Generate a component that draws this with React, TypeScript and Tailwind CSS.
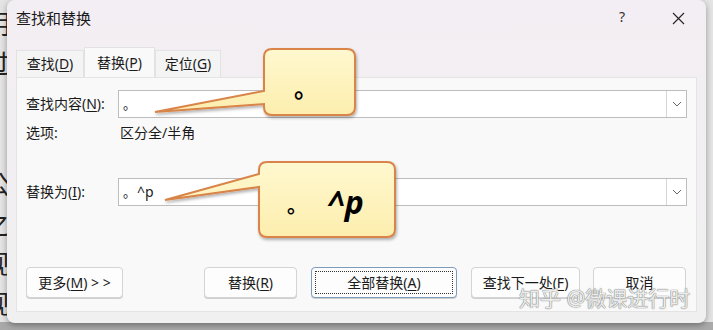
import React from "react";

const F = { fontFamily: '"Noto Sans", "Noto Sans CJK SC", sans-serif' } as const;

function U({ c }: { c: string }) {
  return <span className="underline underline-offset-2">{c}</span>;
}

function Btn({ w, children, def }: { w: string; children: React.ReactNode; def?: boolean }) {
  return (
    <div
      className={`${w} h-[31px] rounded-[4px] border ${def ? "border-[#7d9cbc]" : "border-[#d4d4d4]"} bg-[#fdfdfd] shadow-[0_1px_0_#cfcfcf] flex items-center justify-center p-[3px]`}
    >
      <div className={`w-full h-full flex items-center justify-center ${def ? "border border-dotted border-[#333]" : ""}`}>
        <span className="text-[14px] leading-none text-[#1a1a1a]">{children}</span>
      </div>
    </div>
  );
}

function Combo({ children }: { children?: React.ReactNode }) {
  return (
    <div className="flex-1 h-[28px] border border-[#bdbdbd] bg-white flex items-stretch">
      <div className="flex-1 flex items-center pl-[4px] text-[14px] leading-none text-[#1a1a1a]">{children}</div>
      <div className="w-[20px] border-l border-[#d6d6d6] flex items-center justify-center">
        <svg width="10" height="6" viewBox="0 0 10 6">
          <path d="M1 1 L5 5 L9 1" fill="none" stroke="#666" strokeWidth="1" />
        </svg>
      </div>
    </div>
  );
}

export default function App() {
  return (
    <div className="relative w-[713px] h-[330px] overflow-hidden bg-[#e4e4e4]" style={F}>
      {/* background document text peeking at left */}
      <div className="absolute left-[-16px] top-[4px] flex flex-col text-[26px] leading-[40px] text-[#222]">
        <span>明</span>
        <span>过</span>
        <span>，</span>
        <span>。</span>
        <span>公</span>
        <span>之</span>
        <span>现</span>
        <span>现</span>
      </div>
      <div className="absolute left-0 right-0 bottom-0 h-[8px] bg-[#a9a9a9]" />

      {/* dialog */}
      <div className="absolute left-[7px] top-0 w-[699px] h-[323px] rounded-[8px] bg-gradient-to-b from-[#f3eef3] to-[#f0f0f0] shadow-[0_2px_6px_rgba(0,0,0,0.35)] flex flex-col">
        {/* title bar */}
        <div className="h-[36px] flex items-center pl-[9px] relative">
          <span className="text-[15px] leading-none text-[#1a1a1a]">查找和替换</span>
          <span className="absolute left-[612px] top-[10px] text-[14px] leading-none text-[#333]">?</span>
          <svg className="absolute left-[665px] top-[12px]" width="13" height="13" viewBox="0 0 13 13">
            <path d="M1 1 L12 12 M12 1 L1 12" stroke="#222" strokeWidth="1.1" />
          </svg>
        </div>
        {/* tabs */}
        <div className="h-[41px] flex items-end pl-[9px]">
          <div className="w-[68px] h-[27px] border border-b-0 border-[#e2e2e2] bg-[#f4f4f4] flex items-center justify-center text-[14px] leading-none text-[#1a1a1a]">
            查找(<U c="D" />)
          </div>
          <div className="w-[71px] h-[30px] bg-[#f9f9f9] border border-b-0 border-[#e2e2e2] flex items-center justify-center text-[14px] leading-none text-[#1a1a1a]">
            替换(<U c="P" />)
          </div>
          <div className="w-[66px] h-[27px] border border-b-0 border-[#e2e2e2] bg-[#f4f4f4] flex items-center justify-center text-[14px] leading-none text-[#1a1a1a]">
            定位(<U c="G" />)
          </div>
        </div>
        {/* panel */}
        <div className="mx-[9px] w-[681px] h-[235px] bg-[#f9f9f9] border border-[#e4e4e4] flex flex-col pl-[9px] pr-[9px] pt-[12px]">
          <div className="flex items-center h-[28px]">
            <div className="w-[92px] text-[14px] leading-none text-[#1a1a1a]">
              查找内容(<U c="N" />):
            </div>
            <Combo>
              <span className="text-[13px]">。</span>
            </Combo>
          </div>
          <div className="flex items-center h-[30px]">
            <div className="w-[94px] text-[14px] leading-none text-[#1a1a1a]">选项:</div>
            <div className="text-[14px] leading-none text-[#1a1a1a]">区分全/半角</div>
          </div>
          <div className="flex items-center h-[28px] mt-[30px]">
            <div className="w-[92px] text-[14px] leading-none text-[#1a1a1a]">
              替换为(<U c="I" />):
            </div>
            <Combo>
              <span className="text-[13px]">。</span>
              <span className="ml-[1px]">^p</span>
            </Combo>
          </div>
          <div className="flex items-center mt-[61px]">
            <Btn w="w-[97px]">
              更多(<U c="M" />) &gt; &gt;
            </Btn>
            <div className="ml-[81px]">
              <Btn w="w-[93px]">
                替换(<U c="R" />)
              </Btn>
            </div>
            <div className="ml-[14px]">
              <Btn w="w-[146px]" def>
                全部替换(<U c="A" />)
              </Btn>
            </div>
            <div className="ml-[14px]">
              <Btn w="w-[109px]">
                查找下一处(<U c="F" />)
              </Btn>
            </div>
            <div className="ml-[13px]">
              <Btn w="w-[93px]">取消</Btn>
            </div>
          </div>
        </div>
      </div>

      {/* callouts */}
      <svg className="absolute left-0 top-0" width="713" height="330" viewBox="0 0 713 330">
        <defs>
          <linearGradient id="cg" x1="0" y1="0" x2="0" y2="1">
            <stop offset="0" stopColor="#fff8cf" />
            <stop offset="1" stopColor="#fdeeae" />
          </linearGradient>
          <filter id="sh" x="-20%" y="-20%" width="140%" height="140%">
            <feDropShadow dx="1" dy="2" stdDeviation="1.5" floodColor="#000" floodOpacity="0.3" />
          </filter>
        </defs>
        <path
          d="M272 49 H347 Q355 49 355 57 V107 Q355 115 347 115 H272 Q264 115 264 107 V104 L155 112 L264 91 V57 Q264 49 272 49 Z"
          fill="url(#cg)"
          stroke="#d9844a"
          strokeWidth="2"
          filter="url(#sh)"
        />
        <path
          d="M267 162 H387 Q395 162 395 170 V229 Q395 237 387 237 H267 Q259 237 259 229 V187 L165 200 L259 174 V170 Q259 162 267 162 Z"
          fill="url(#cg)"
          stroke="#d9844a"
          strokeWidth="2"
          filter="url(#sh)"
        />
      </svg>
      <div className="absolute left-[294px] top-[76px] text-[24px] leading-none font-bold text-black">。</div>
      <div className="absolute left-[287px] top-[196px] text-[20px] leading-none font-bold text-black">。</div>
      <div className="absolute left-[327px] top-[186px] text-[32px] leading-none font-bold italic text-black" style={{ fontFamily: '"Open Sans", "Noto Sans", sans-serif' }}>
        ^p
      </div>

      {/* watermark */}
      <div
        className="absolute left-[519px] top-[288px] text-[21px] leading-none text-[#ececec]"
        style={{ textShadow: "0 0 1px #666, 0 0 1px #888" }}
      >
        知乎 @微课进行时
      </div>
    </div>
  );
}
